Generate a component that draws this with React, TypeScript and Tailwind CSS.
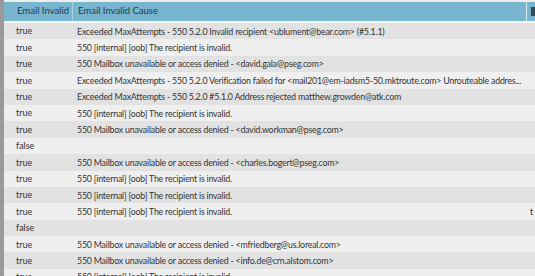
import React from "react";

const rows: [string, string, string?][] = [
  ["true", "Exceeded MaxAttempts - 550 5.2.0 Invalid recipient <ublument@bear.com> (#5.1.1)"],
  ["true", "550 [internal] [oob] The recipient is invalid."],
  ["true", "550 Mailbox unavailable or access denied - <david.gala@pseg.com>"],
  ["true", "Exceeded MaxAttempts - 550 5.2.0 Verification failed for <mail201@em-iadsm5-50.mktroute.com> Unrouteable addres..."],
  ["true", "Exceeded MaxAttempts - 550 5.2.0 #5.1.0 Address rejected matthew.growden@atk.com"],
  ["true", "550 [internal] [oob] The recipient is invalid."],
  ["true", "550 Mailbox unavailable or access denied - <david.workman@pseg.com>"],
  ["false", ""],
  ["true", "550 Mailbox unavailable or access denied - <charles.bogert@pseg.com>"],
  ["true", "550 [internal] [oob] The recipient is invalid."],
  ["true", "550 [internal] [oob] The recipient is invalid."],
  ["true", "550 [internal] [oob] The recipient is invalid.", "t"],
  ["false", ""],
  ["true", "550 Mailbox unavailable or access denied - <mfriedberg@us.loreal.com>"],
  ["true", "550 Mailbox unavailable or access denied - <info.de@crn.alstom.com>"],
  ["true", "550 [internal] [oob] The recipient is invalid."],
];

export default function App() {
  return (
    <div
      className="w-[535px] h-[276px] overflow-hidden bg-[#8f8f8f] flex"
      style={{ fontFamily: 'Lato, "Noto Sans", sans-serif' }}
    >
      <div className="w-[4px] shrink-0 bg-[#9a9a9a]" />
      <div className="flex-1 flex flex-col pt-[2px] bg-[#eeeeee] overflow-hidden">
        <div className="flex h-[19px] shrink-0 bg-[#78b5cf] text-[9.5px] text-[#1f3a4a] items-center whitespace-nowrap">
          <div className="w-[69px] shrink-0 pl-[13px] border-r border-[#a9d2e3] h-full flex items-center">Email Invalid</div>
          <div className="w-[454px] shrink-0 pl-[5px] border-r border-[#d8ecf4] h-full flex items-center">Email Invalid Cause</div>
          <div className="flex-1 pl-[4px] h-full flex items-center">
            <div className="w-[4px] h-[9px] bg-[#3a4a55]" />
          </div>
        </div>
        <div className="h-[2px] shrink-0 bg-[#f6f6f6]" />
        {rows.map((r, i) => (
          <div
            key={i}
            className={`flex h-[16.4px] shrink-0 items-center text-[8.8px] tracking-[-0.2px] text-[#333333] whitespace-nowrap ${i % 2 === 0 ? "bg-[#e2e2e2]" : "bg-[#efefef]"}`}
          >
            <div className="w-[69px] shrink-0 pl-[12px] text-[9px] tracking-normal">{r[0]}</div>
            <div className="w-[454px] shrink-0 pl-[4px] overflow-hidden">{r[1]}</div>
            <div className="flex-1 pl-[3px] overflow-hidden">{r[2] ?? ""}</div>
          </div>
        ))}
      </div>
    </div>
  );
}
